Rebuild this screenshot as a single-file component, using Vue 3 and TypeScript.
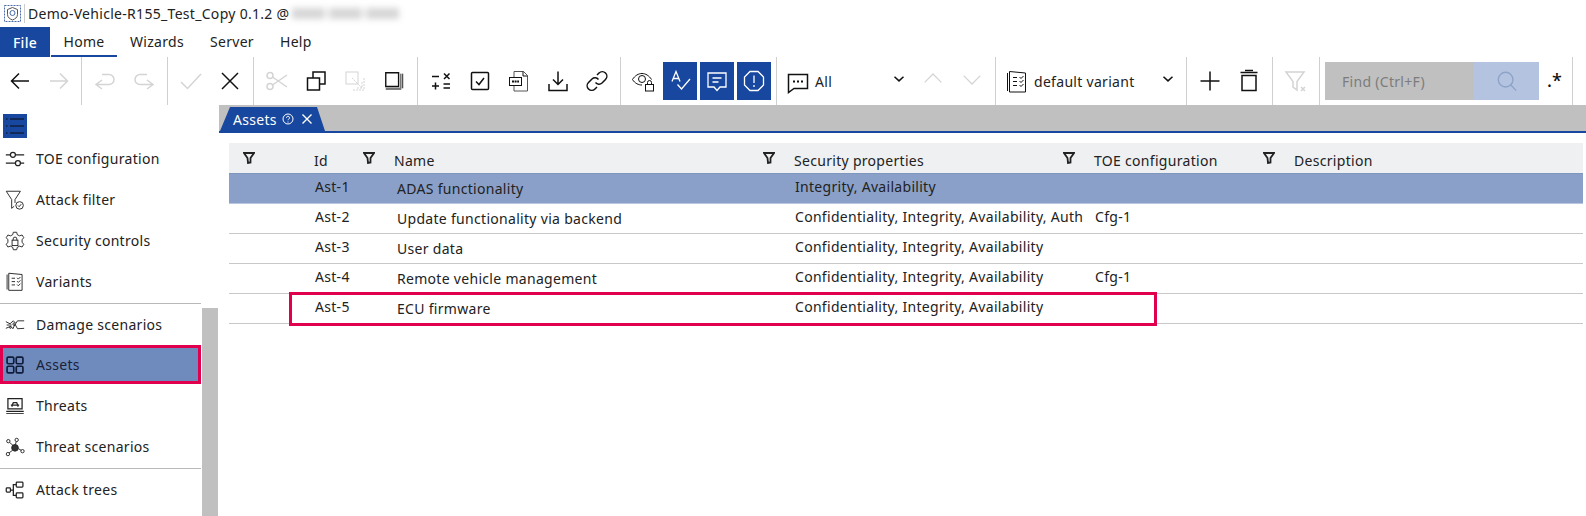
<script setup lang="ts">
interface Row { id: string; name: string; sec: string; toe: string; sel?: boolean; mark?: boolean }
const rows: Row[] = [
  { id: 'Ast-1', name: 'ADAS functionality', sec: 'Integrity, Availability', toe: '', sel: true },
  { id: 'Ast-2', name: 'Update functionality via backend', sec: 'Confidentiality, Integrity, Availability, Auth', toe: 'Cfg-1' },
  { id: 'Ast-3', name: 'User data', sec: 'Confidentiality, Integrity, Availability', toe: '' },
  { id: 'Ast-4', name: 'Remote vehicle management', sec: 'Confidentiality, Integrity, Availability', toe: 'Cfg-1' },
  { id: 'Ast-5', name: 'ECU firmware', sec: 'Confidentiality, Integrity, Availability', toe: '', mark: true },
]
const menus = ['Wizards', 'Server', 'Help']
const headers = [
  { label: 'Id', cls: 'h-id' },
  { label: 'Name', cls: 'h-name' },
  { label: 'Security properties', cls: 'h-sec' },
  { label: 'TOE configuration', cls: 'h-toe' },
  { label: 'Description', cls: 'h-desc' },
]
</script>

<template>
  <div class="app">
    <div class="title">
      <svg class="logo" width="20" height="20" viewBox="0 0 20 20" fill="none" stroke="#4a6aa8" stroke-width="1">
        <rect x="1.5" y="1.5" width="16" height="16" stroke-dasharray="2 1" />
        <path d="M9.5 3.5l5 2v5c0 3-2.500 4.500-5 5.500-2.500-1-5-2.500-5-5.500v-5z" stroke="#555" />
        <circle cx="9.500" cy="9" r="2.500" stroke="#4a6aa8" />
      </svg>
      <span class="title-sep"></span>
      <span>Demo-Vehicle-R155_Test_Copy 0.1.2 @</span>
      <span class="blur"><i></i><i></i><i></i></span>
    </div>

    <div class="menu">
      <div class="file">File</div>
      <div class="home">Home</div>
      <div v-for="m in menus" :key="m" class="menu-item">{{ m }}</div>
    </div>

    <div class="toolbar">
      <div class="group first">
        <div class="tb"><svg viewBox="0 0 24 24" class="ic"><path d="M21 12H3.500M11 4.500L3.500 12l7.500 7.500" /></svg></div>
        <div class="tb"><svg viewBox="0 0 24 24" class="ic off"><path d="M3 12h17.500M13 4.500l7.500 7.500-7.500 7.500" /></svg></div>
      </div>
      <div class="group">
        <div class="tb"><svg viewBox="0 0 24 24" class="ic off"><path d="M9 20l-6-4.500L9 11M3 15.500h13a5 5 0 0 0 0-10H9" /></svg></div>
        <div class="tb"><svg viewBox="0 0 24 24" class="ic off"><path d="M15 20l6-4.500L15 11M21 15.500H8a5 5 0 0 1 0-10h7" /></svg></div>
      </div>
      <div class="group">
        <div class="tb"><svg viewBox="0 0 24 24" class="ic off"><path d="M2 13l6.500 6.500L22 5" /></svg></div>
        <div class="tb"><svg viewBox="0 0 24 24" class="ic"><path d="M4 4l16 16M20 4L4 20" /></svg></div>
      </div>
      <div class="group">
        <div class="tb"><svg viewBox="0 0 24 24" class="ic off"><circle cx="5" cy="6.500" r="3" /><circle cx="5" cy="17.500" r="3" /><path d="M7.500 8L22 18M7.500 16L22 6" /></svg></div>
        <div class="tb"><svg viewBox="0 0 24 24" class="ic"><rect x="9" y="3" width="12" height="12" /><rect x="3.500" y="9" width="12" height="12" fill="#fff" /></svg></div>
        <div class="tb"><svg viewBox="0 0 24 24" class="ic off thin"><rect x="3" y="3" width="12" height="12" /><path d="M9 9l10 10M19 13v6h-6M21 9v12H9" stroke-dasharray="2 1" /></svg></div>
        <div class="tb"><svg viewBox="0 0 24 24" class="ic dup"><path d="M3 3h14v15H3z" /><path d="M19.500 4v16M21.500 4v16" stroke-width="1" /><path d="M3 20.500h17" stroke="#777" stroke-width="2.500" /></svg></div>
      </div>
      <div class="group">
        <div class="tb"><svg viewBox="0 0 24 24" class="ic"><path d="M3 7.500h7M15 4.500l5.500 5.500M20.500 4.500L15 10M3 17h7M6.500 13.500v7M14.500 15h6.500M14.500 19h6.500" /></svg></div>
        <div class="tb"><svg viewBox="0 0 24 24" class="ic"><rect x="3.500" y="3.500" width="17" height="17" rx="1" /><path d="M8 12.500l3 3 5-6.500" /></svg></div>
        <div class="tb"><svg viewBox="0 0 24 24" class="ic thin"><path d="M7 8V2.500h9.500l4 4V22H7v-5" stroke="#555" /><path d="M16 2.500V7h4.500" /><rect x="2.500" y="8.500" width="12" height="8" fill="#fff" /><path d="M5 12.500h7" stroke-width="2" stroke-dasharray="2 .6" /></svg></div>
        <div class="tb"><svg viewBox="0 0 24 24" class="ic"><path d="M12 2.500v13M7 10.500l5 5 5-5M3 15v6.500h18V15" /></svg></div>
        <div class="tb"><svg viewBox="0 0 24 24" class="ic"><path d="M10.500 13.500a4.500 4.500 0 0 0 6.500.5l3.500-3.500a4.500 4.500 0 0 0-6.500-6.500l-2 2" /><path d="M13.500 10.500a4.500 4.500 0 0 0-6.500-.5l-3.500 3.500a4.500 4.500 0 0 0 6.500 6.500l2-2" /></svg></div>
      </div>
      <div class="group flags">
        <div class="tb"><svg viewBox="0 0 24 24" class="ic thin"><path d="M1.500 10.500C4 6.500 7.500 4.500 11 4.500s7 2 9.500 6" /><path d="M1.500 10.500C4 14.500 7.500 16 11 16" /><circle cx="11" cy="10" r="3.500" /><rect x="14.500" y="15.500" width="8" height="6.500" /><path d="M16.500 15.500v-2a2 2 0 0 1 4 0v2" /></svg></div>
        <div class="flag"><svg viewBox="0 0 24 24" class="ic inv"><path d="M4 12.500L8 2.500 12 12.500M5.300 9.500h5.400M9.500 15.500l4 4.500L22 10" /></svg></div>
        <div class="flag"><svg viewBox="0 0 24 24" class="ic inv"><path d="M3 4h18v14h-6l-3 3.500L9 18H3z" /><path d="M7.500 9h9M7.500 13h6" /></svg></div>
        <div class="flag"><svg viewBox="0 0 24 24" class="ic inv"><path d="M8 2.500h8L21.500 8v8L16 21.500H8L2.500 16V8z" /><path d="M12 6.500v7.500M12 16v2" /></svg></div>
      </div>
      <div class="group comments">
        <svg viewBox="0 0 24 24" class="ic cmt"><path d="M2.500 4.500h19v14H8l-5.500 4z" /><path d="M7 11.500h2M11 11.500h2M15 11.500h2" stroke-width="2" /></svg>
        <span class="all">All</span>
        <svg viewBox="0 0 24 24" class="chev"><path d="M6 9l6 5.500L18 9" /></svg>
        <svg viewBox="0 0 24 24" class="ic off nav1"><path d="M2 16L12 6l10 10" /></svg>
        <svg viewBox="0 0 24 24" class="ic off nav2"><path d="M2 8l10 10L22 8" /></svg>
      </div>
      <div class="group variant">
        <svg viewBox="0 0 24 24" class="ic thin var"><path d="M2.500 3v18M4.500 1.500v20.500h16V3z" /><path d="M8 7.500h4M8 11.500h4M8 15.500h4M14.500 7l1.500 1.500 2.500-2.500M14.500 11l1.500 1.500 2.500-2.500M14.500 15l1.500 1.500 2.500-2.500" /></svg>
        <span class="var-text">default variant</span>
        <svg viewBox="0 0 24 24" class="chev"><path d="M6 9l6 5.500L18 9" /></svg>
      </div>
      <div class="group">
        <div class="tb"><svg viewBox="0 0 24 24" class="ic"><path d="M12 2.500v19M2.500 12h19" /></svg></div>
        <div class="tb"><svg viewBox="0 0 24 24" class="ic"><path d="M5 6.500h14v15H5zM3.500 3.500h17" /><path d="M8 1.500h8" /></svg></div>
      </div>
      <div class="group">
        <div class="tb"><svg viewBox="0 0 24 24" class="ic off"><path d="M2 3h18l-7 9.500V21l-4-3v-5.500zM17 18l4 4M21 18l-4 4" /></svg></div>
      </div>
      <div class="group search">
        <div class="find">Find (Ctrl+F)</div>
        <div class="find-btn"><svg viewBox="0 0 24 24" class="lens"><circle cx="10.500" cy="10.500" r="8" /><path d="M16 16l6 6.500" /></svg></div>
        <div class="regex">.*</div>
      </div>
    </div>

    <div class="body">
      <aside class="side">
        <div class="side-list">
          <div class="toggle"><svg viewBox="0 0 24 24" width="24" height="24"><path d="M7 5h14M7 12h14M7 19h14M3 5h1.500M3 12h1.500M3 19h1.500" fill="none" stroke="#10213f" stroke-width="1.500" /></svg></div>

          <div class="item"><svg viewBox="0 0 24 24" class="si"><path d="M1 7h5.500M12.500 7H23M1 17h11.500M18.500 17H23" /><circle cx="9.500" cy="7" r="3" /><circle cx="15.500" cy="17" r="3" /></svg><span>TOE configuration</span></div>
          <div class="item"><svg viewBox="0 0 24 24" class="si thin"><path d="M1.500 1.500h17l-6.500 10v4M8 22V11.500l-6.500-10" /><path d="M8 22l3-2.500" /><circle cx="17.500" cy="18.500" r="4.500" /><path d="M15.500 18.500l1.500 1.500 2.500-3" /></svg><span>Attack filter</span></div>
          <div class="item"><svg viewBox="0 0 24 24" class="si thin"><path d="M10 1.500h4l.8 3 2.700 1.300 3-1 2 3.200-2 2.500v3l2 2.500-2 3.200-3-1-2.700 1.300-.8 3h-4l-.8-3-2.700-1.300-3 1-2-3.200 2-2.500v-3l-2-2.500 2-3.200 3 1 2.700-1.300z" /><rect x="8.500" y="11" width="7" height="6.500" /><path d="M9.800 11V9.500a2.200 2.200 0 0 1 4.400 0V11" /></svg><span>Security controls</span></div>
          <div class="item"><svg viewBox="0 0 24 24" class="si thin"><path d="M2.500 3v18M4.500 1.500v20.500h16V3z" /><path d="M8 7.500h4M8 11.500h4M8 15.500h4M14.500 7l1.500 1.500 2.500-2.500M14.500 11l1.500 1.500 2.500-2.500M14.500 15l1.500 1.500 2.500-2.500" /></svg><span>Variants</span></div>
          <div class="rule"></div>
          <div class="item"><svg viewBox="0 0 24 24" class="si thin"><path d="M1 8l5 2.500L10 7l3 3 2-3h8M1 16l6-2.500 2.500 3L12 11l3 5.500 8-.5M2 12h6" /><circle cx="11" cy="11" r="1.500" /><circle cx="6.500" cy="15" r="1" /></svg><span>Damage scenarios</span></div>
          <div class="item active"><svg viewBox="0 0 24 24" class="si sq"><rect x="2.500" y="2.500" width="8" height="8" rx="1.500" /><rect x="13.500" y="2.500" width="8" height="8" rx="1.500" /><rect x="2.500" y="13.500" width="8" height="8" rx="1.500" /><rect x="13.500" y="13.500" width="8" height="8" rx="1.500" /></svg><span>Assets</span></div>
          <div class="item"><svg viewBox="0 0 24 24" class="si"><path d="M3.500 15.500V3h17v12.500zM1.500 18.500h21" /><path d="M1.500 21h21" stroke-width="1" /><path d="M7 11h10M8.500 11l1.500-3h4l1.500 3M8.500 13v-2M15.500 13v-2" /></svg><span>Threats</span></div>
          <div class="item"><svg viewBox="0 0 24 24" class="si thin"><circle cx="12" cy="13" r="4" fill="#333" /><circle cx="14" cy="3.500" r="2" /><circle cx="4" cy="5" r="2" /><circle cx="3.500" cy="20.500" r="2" /><circle cx="21" cy="17" r="2" /><path d="M13.500 5.500L12.500 9M5.500 6.500L9.500 10M5 19l4-3M16 14l3.500 2" /></svg><span>Threat scenarios</span></div>
          <div class="rule"></div>
          <div class="item"><svg viewBox="0 0 24 24" class="si"><rect x="1.500" y="9.500" width="5" height="5" rx="1" /><rect x="13.500" y="2.500" width="8" height="6" rx="1" /><rect x="13.500" y="15.500" width="8" height="6" rx="1" /><path d="M6.500 12h3.500M13.500 5.500H10v13h3.500" /></svg><span>Attack trees</span></div>
        </div>
        <div class="side-track"></div>
      </aside>

      <main class="main">
        <div class="tabs">
          <div class="tab">
            <span>Assets</span>
            <svg viewBox="0 0 12 12" class="tab-q"><circle cx="6" cy="6" r="5" /><path d="M4.500 4.800a1.500 1.500 0 1 1 2.200 1.300c-.5.300-.7.600-.7 1.100M6 8.500v1" /></svg>
            <svg viewBox="0 0 12 12" class="tab-x"><path d="M1.500 1.500l9 9M10.500 1.500l-9 9" /></svg>
          </div>
        </div>
        <div class="table">
          <div class="tr head">
            <div v-for="h in headers" :key="h.label" class="th" :class="h.cls">
              <svg viewBox="0 0 12 12" class="fil"><path d="M1 1h10L7.500 6v4.500L5 11 4.500 6z" /></svg>
              <span>{{ h.label }}</span>
            </div>
          </div>
          <div v-for="r in rows" :key="r.id" class="tr row" :class="{ sel: r.sel }">
            <div class="td c-id">{{ r.id }}</div>
            <div class="td c-name">{{ r.name }}</div>
            <div class="td c-sec">{{ r.sec }}</div>
            <div class="td c-toe">{{ r.toe }}</div>
            <div class="td"></div>
            <div v-if="r.mark" class="mark"></div>
          </div>
        </div>
      </main>
    </div>
  </div>
</template>

<style>
html, body { margin: 0; background: #fff; }
</style>

<style scoped>
.app {
  width: 1586px;
  height: 516px;
  overflow: hidden;
  display: flex;
  flex-direction: column;
  background: #fff;
  color: #222;
  font-family: "Noto Sans", "Liberation Sans", sans-serif;
  font-size: 14px;
  letter-spacing: .3px;
}
.title {
  height: 27px;
  display: flex;
  align-items: center;
  padding-left: 3px;
}
.logo { width: 20px; height: 20px; }
.title-sep { width: 1px; height: 19px; background: #ccc; margin: 0 3px 0 1px; }
.blur { display: flex; gap: 4px; margin-left: 2px; filter: blur(3px); }
.blur i { display: block; width: 33px; height: 11px; background: #d6d6d6; }

.menu { height: 30px; display: flex; align-items: stretch; }
.file {
  width: 50px;
  background: #17479e;
  color: #fff;
  font-weight: 500;
  display: flex;
  align-items: center;
  justify-content: center;
}
.home {
  width: 66px;
  margin-left: 1px;
  border-bottom: 2px solid #17479e;
  box-sizing: border-box;
  display: flex;
  align-items: center;
  justify-content: center;
  padding-top: 1px;
}
.menu-item { display: flex; align-items: center; padding: 0 13px 1px; }

.toolbar { height: 48px; display: flex; }
.group {
  box-sizing: border-box;
  height: 48px;
  display: flex;
  align-items: center;
  padding: 0 4px 0 3px;
  border-right: 1px solid #cfcfcf;
  flex: none;
}
.group.first { padding: 0 3px 0 0; width: 82px; }
.tb {
  width: 39px;
  height: 38px;
  display: flex;
  align-items: center;
  justify-content: center;
  align-self: flex-start;
  margin-top: 5px;
}
.ic { width: 24px; height: 24px; fill: none; stroke: #111; stroke-width: 1.500; flex: none; }
.ic.thin { stroke-width: 1; }
.ic.off { stroke: #d4d4d4; }
.ic.dup { width: 22px; height: 22px; }
.ic.inv { stroke: #fff; stroke-width: 1.300; }
.flags { width: 156px; padding: 0 0 0 3px; gap: 3px; }
.flags .tb { width: 38px; margin-right: -2px; }
.flag {
  width: 34px;
  height: 38px;
  align-self: flex-start;
  margin-top: 5px;
  background: #17479e;
  display: flex;
  align-items: center;
  justify-content: center;
}
.comments { width: 219px; padding: 0 0 0 9px; }
.cmt { margin-top: 2px; }
.all { margin-left: 5px; width: 75px; }
.chev { width: 18px; height: 18px; fill: none; stroke: #111; stroke-width: 2; margin-top: -4px; flex: none; }
.nav1 { margin-left: 15px; width: 20px; height: 20px; margin-top: -4px; }
.nav2 { margin-left: 19px; width: 20px; height: 20px; margin-top: -4px; }
.variant { width: 191px; padding: 0 0 0 9px; }
.var { margin-top: 2px; }
.var-text { margin-left: 5px; width: 125px; }
.search { width: 253px; padding: 0 0 0 5px; }
.find {
  width: 149px;
  height: 38px;
  align-self: flex-start;
  margin-top: 5px;
  background: #c0c0c0;
  color: #7c7c7c;
  display: flex;
  align-items: center;
  padding-left: 17px;
  box-sizing: border-box;
}
.find-btn {
  width: 65px;
  height: 38px;
  align-self: flex-start;
  margin-top: 5px;
  background: #b4c4e0;
  display: flex;
  align-items: center;
  justify-content: center;
}
.lens { width: 22px; height: 22px; fill: none; stroke: #8ea3c8; stroke-width: 1.500; }
.regex { margin-left: 8px; margin-top: -2px; font-size: 18px; font-weight: 500; color: #111; line-height: 1; letter-spacing: 0; }

.body { flex: 1; display: flex; min-height: 0; }
.side { width: 219px; flex: none; display: flex; }
.side-list { width: 201px; }
.toggle {
  width: 24px;
  height: 24px;
  margin: 9px 0 0 3px;
  background: #17479e;
}
.item { height: 41px; display: flex; align-items: center; padding-left: 5px; gap: 11px; box-sizing: border-box; }
.item.active {
  height: 39px;
  margin-bottom: 1px;
  background: #6f8bbd;
  color: #1a2238;
  outline: 3px solid #e0004d;
  outline-offset: -3px;
}
.si { width: 20px; height: 20px; fill: none; stroke: #222; stroke-width: 1.500; flex: none; }
.si.thin { stroke-width: 1.100; }
.si.sq { stroke: #0f1c3c; stroke-width: 2; }
.rule { height: 1px; background: #b9b9b9; margin-top: 1px; }
.side-track { width: 16px; margin: 203px 0 0 1px; background: #c0c0c0; }

.main { flex: 1; min-width: 0; }
.tabs {
  height: 26px;
  background: #c0c0c0;
  border-bottom: 2px solid #17479e;
  display: flex;
  align-items: flex-end;
  padding-left: 1px;
}
.tab {
  width: 105px;
  height: 24px;
  box-sizing: border-box;
  background: #17479e;
  color: #fff;
  display: flex;
  align-items: center;
  padding-left: 13px;
  gap: 5px;
  clip-path: polygon(10px 0, 97px 0, 105px 100%, 0 100%);
}
.tab-q, .tab-x { width: 12px; height: 12px; fill: none; stroke: #fff; stroke-width: 1; }
.tab-x { margin-left: 2px; stroke-width: 1.400; }

.table { margin: 10px 3px 0 10px; }
.tr {
  position: relative;
  display: grid;
  grid-template-columns: 131px 400px 300px 200px 1fr;
  align-items: center;
}
.head { height: 30px; background: #eef0f2; }
.th { display: flex; align-items: center; height: 30px; padding-left: 3px; }
.th span { margin-left: 19px; margin-top: 5px; }
.fil { width: 12px; height: 12px; fill: none; stroke: #222; stroke-width: 1.800; flex: none; }
.h-id { padding-left: 14px; }
.h-id span { margin-left: 59px; }
.row { height: 30px; border-bottom: 1px solid #c8c8c8; box-sizing: border-box; }
.row.sel { height: 31px; background: #8aa0c8; border-bottom: 1px solid #b9c6dd; border-top: 1px solid #7f96bf; }
.td { white-space: nowrap; line-height: 20px; margin-top: -3px; }
.c-id { padding-left: 86px; }
.c-name { padding-left: 37px; margin-top: 0; }
.c-sec { padding-left: 35px; }
.c-toe { padding-left: 35px; }
.mark {
  position: absolute;
  left: 60px;
  top: -2px;
  width: 868px;
  height: 34px;
  box-sizing: border-box;
  border: 3px solid #e0004d;
}
</style>
